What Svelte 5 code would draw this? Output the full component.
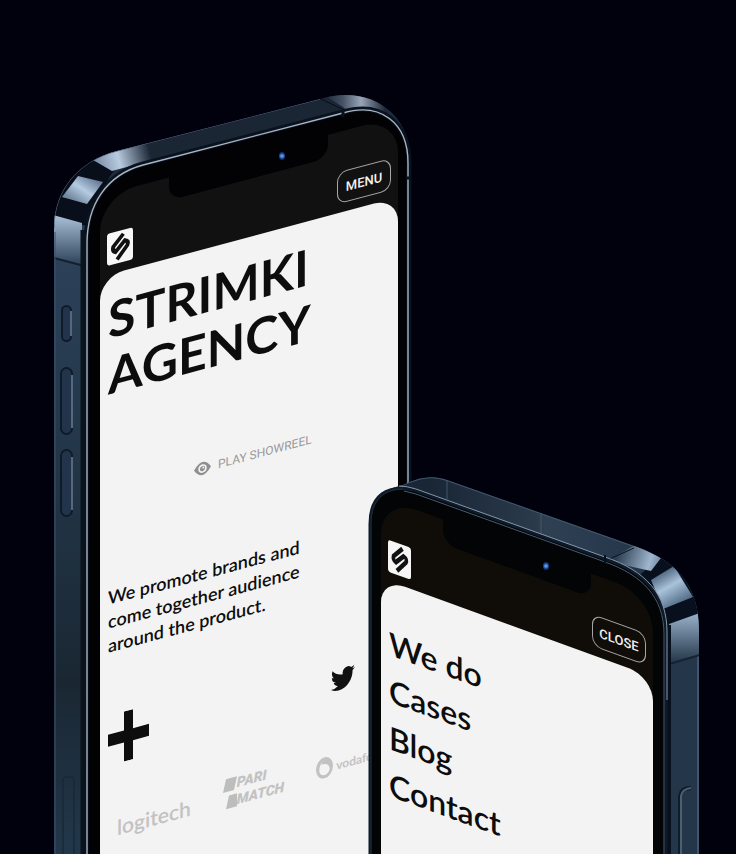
<script>
  const menu = ['We do', 'Cases', 'Blog', 'Contact'];
</script>

{#snippet logo()}
  <a class="logo" href="#home" aria-label="Strimki home">
    <svg viewBox="0 0 27 32" preserveAspectRatio="none" aria-hidden="true">
      <path d="M17 4 L6.500 14.500 Q5.500 18.500 9 20 L18.500 11 Q23 12.500 21 16.500 L10.500 28" />
    </svg>
  </a>
{/snippet}

<main>
  <article class="phone back">
    <svg class="body" viewBox="50 90 362 764" aria-hidden="true">
      <defs>
        <linearGradient id="side1" gradientUnits="userSpaceOnUse" x1="0" y1="150" x2="0" y2="860">
          <stop offset="0" stop-color="#1b2635" />
          <stop offset="0.15" stop-color="#2c4058" />
          <stop offset="0.4" stop-color="#24384b" />
          <stop offset="0.75" stop-color="#1a2733" />
          <stop offset="1" stop-color="#22384b" />
        </linearGradient>
        <linearGradient id="glowA" gradientUnits="userSpaceOnUse" x1="98" y1="166" x2="150" y2="152">
          <stop offset="0" stop-color="#7d91a9" />
          <stop offset="0.4" stop-color="#b9cbe0" />
          <stop offset="1" stop-color="#1b2635" />
        </linearGradient>
        <linearGradient id="glowB" gradientUnits="userSpaceOnUse" x1="92" y1="178" x2="76" y2="202">
          <stop offset="0" stop-color="#6c8199" />
          <stop offset="0.5" stop-color="#b4cbe2" />
          <stop offset="1" stop-color="#71889f" />
        </linearGradient>
        <linearGradient id="glowC" gradientUnits="userSpaceOnUse" x1="0" y1="216" x2="0" y2="262">
          <stop offset="0" stop-color="#a8bfd6" />
          <stop offset="1" stop-color="#34495f" />
        </linearGradient>
        <linearGradient id="glowD" gradientUnits="userSpaceOnUse" x1="325" y1="0" x2="411" y2="0">
          <stop offset="0" stop-color="#1f2a38" />
          <stop offset="0.2" stop-color="#445062" />
          <stop offset="0.42" stop-color="#98a4b8" />
          <stop offset="0.7" stop-color="#1c2738" />
          <stop offset="1" stop-color="#26384c" />
        </linearGradient>
        <clipPath id="shape1">
          <path d="M54 1600 V228 C54 190 78 161 117 151 L320 99 C370 84 411 113 411 163 V1600 Z" />
        </clipPath>
      </defs>
      <g clip-path="url(#shape1)">
        <rect x="50" y="90" width="362" height="1500" fill="url(#side1)" />
        <path d="M54 216 L86 226 L110 176 L120 164 L118 145 L60 160 Z" fill="#080f1b" />
        <path d="M93 160 L117 149 L160 138 V158 L112 171 Z" fill="url(#glowA)" />
        <path d="M78 176 L103 182 L87 204 L62 197 Z" fill="url(#glowB)" />
        <path d="M53 215 L82 223 V264 L53 258 Z" fill="url(#glowC)" />
        <path d="M319 92 L343 107 L412 170 L420 90 Z" fill="url(#glowD)" />
        <path d="M319 98 L344 110" stroke="#080d16" stroke-width="1" />
        <path d="M54 258 L88 267" stroke="#121f2e" stroke-width="2" />
        <path d="M83 230 V1600" stroke="#0b131d" stroke-width="5" />
        <path d="M55 232 V1600" stroke="#3c526a" stroke-width="1" />
        <path d="M54 228 C54 190 78 161 117 151 L320 99" fill="none" stroke="#50647b" stroke-width="1" />
      </g>
      <path d="M86 1600 V244 C86 205 106 174 143 164 L343 112 C381 101 409 122 409 163 V1600 Z" fill="#020204" stroke="#0a121e" stroke-width="5" />
      <path d="M87 1600 V244 C87 205 106 175 143 165 L343 113 C380 102 408 122 408 163 V1600" fill="none" stroke="#a7b5c5" stroke-width="1.400" />
      <path d="M343 110 V117 M406 178 H411" stroke="#09111c" stroke-width="3" />
      <g class="key">
        <rect x="62" y="306" width="9" height="35" rx="4.500" />
        <rect x="61" y="368" width="11" height="66" rx="5.500" />
        <rect x="61" y="450" width="11" height="66" rx="5.500" />
      </g>
      <path d="M71 311 V336 M72 375 V428 M72 457 V510" stroke="#6c8298" stroke-width="1.500" />
      <path d="M63 854 V780 Q63 777 66 777 H71 Q74 777 74 780 V854" fill="none" stroke="#152430" stroke-width="1" />
    </svg>
    <div class="screen left">
      <header>
        {@render logo()}
        <button class="pill">MENU</button>
      </header>
      <section class="card home">
        <h1>STRIMKI<br />AGENCY</h1>
        <button class="reel">
          <svg viewBox="0 0 17 16" width="17" height="16" aria-hidden="true">
            <path d="M0 8 Q8.500 -5 17 8 Q8.500 21 0 8 Z" fill="#8f8f8f" />
            <circle cx="8.500" cy="8" r="4.200" fill="#f3f3f3" />
            <circle cx="8.500" cy="8" r="2.600" fill="#8f8f8f" />
            <circle cx="9.300" cy="7.200" r="1" fill="#f3f3f3" />
          </svg>
          PLAY SHOWREEL
        </button>
        <p>We promote brands and<br />come together audience<br />around the product.</p>
        <div class="marks">
          <svg viewBox="0 0 41 50" width="41" height="50" aria-hidden="true">
            <path d="M16 0 H25 V19 H41 V31 H25 V50 H16 V31 H0 V19 H16 Z" fill="#0d0d0d" />
          </svg>
          <a href="#twitter" aria-label="Twitter">
            <svg viewBox="0 0 24 24" width="24" height="27" preserveAspectRatio="none" aria-hidden="true">
              <path fill="#111" d="M23.950 4.570a10 10 0 0 1-2.820.770 4.960 4.960 0 0 0 2.160-2.720c-.950.550-2 .960-3.130 1.180a4.920 4.920 0 0 0-8.380 4.480C7.690 8.090 4.070 6.130 1.640 3.160a4.820 4.820 0 0 0-.670 2.480c0 1.710.870 3.210 2.190 4.100a4.900 4.900 0 0 1-2.230-.620v.060a4.920 4.920 0 0 0 3.950 4.830 5 5 0 0 1-2.210.080 4.940 4.940 0 0 0 4.600 3.420A9.870 9.870 0 0 1 0 19.540a13.990 13.990 0 0 0 7.550 2.210c9.050 0 14-7.500 14-13.980 0-.210 0-.420-.020-.630a9.940 9.940 0 0 0 2.420-2.570z" />
            </svg>
          </a>
        </div>
        <div class="clients">
          <span class="logitech">logitech</span>
          <span class="pari">
            <svg viewBox="0 0 14 34" width="14" height="34" aria-hidden="true">
              <path d="M3 2 H14 L11 15 H0 Z M6 19 H14 V32 H3 Z" fill="#bdbdbd" />
            </svg>
            <span>PARI<br />MATCH</span>
          </span>
          <span class="vodafone">
            <svg viewBox="0 0 17 22" width="17" height="22" aria-hidden="true">
              <ellipse cx="8.500" cy="11" rx="8.500" ry="10.500" fill="#c2c2c2" />
              <path d="M11 1 C7 3 5.500 4.500 5.500 7 C11 6.500 14.500 10 13.500 14.500 C11.500 20 4.500 19 3.500 14 C2.500 9 5.500 3 11 1 Z" fill="#f3f3f3" />
            </svg>
            vodafone
          </span>
        </div>
      </section>
      <i class="notch"></i>
    </div>
    <i class="lens"></i>
  </article>

  <article class="phone front">
    <svg class="body" viewBox="368 474 334 380" aria-hidden="true">
      <defs>
        <linearGradient id="side2" gradientUnits="userSpaceOnUse" x1="430" y1="0" x2="640" y2="0">
          <stop offset="0" stop-color="#182636" />
          <stop offset="0.5" stop-color="#2b3a4a" />
          <stop offset="0.55" stop-color="#2f4053" />
          <stop offset="1" stop-color="#24364a" />
        </linearGradient>
        <linearGradient id="glowE" gradientUnits="userSpaceOnUse" x1="618" y1="552" x2="660" y2="566">
          <stop offset="0" stop-color="#2b3d51" />
          <stop offset="0.75" stop-color="#9fb6ce" />
          <stop offset="1" stop-color="#71879e" />
        </linearGradient>
        <linearGradient id="glowF" gradientUnits="userSpaceOnUse" x1="662" y1="572" x2="680" y2="603">
          <stop offset="0" stop-color="#50677f" />
          <stop offset="0.45" stop-color="#a9c3db" />
          <stop offset="1" stop-color="#56708a" />
        </linearGradient>
        <linearGradient id="glowG" gradientUnits="userSpaceOnUse" x1="0" y1="616" x2="0" y2="660">
          <stop offset="0" stop-color="#92abc3" />
          <stop offset="1" stop-color="#2a3d50" />
        </linearGradient>
        <clipPath id="shape2">
          <path d="M369 1600 V524 C369 500 383 489 403 485 C416 479 430 474 447 480 L637 547 C676 561 699 585 699 630 V1600 Z" />
        </clipPath>
      </defs>
      <g clip-path="url(#shape2)">
        <rect x="368" y="470" width="334" height="1130" fill="url(#side2)" />
        <path d="M447 480 V499 M541 513 V534" stroke="#42566c" stroke-width="1" />
        <path d="M400 486 C416 479 430 474 447 480 L637 547 C676 561 699 585 698 630 V1600" fill="none" stroke="#41566c" stroke-width="2" />
        <path d="M640 575 L662 555 L710 590 L697 616 L667 626 Z" fill="#07101c" />
        <path d="M635 545 L661 558 L651 571 L606 561 Z" fill="url(#glowE)" />
        <path d="M651 580 L674 566 L693 597 L663 609 Z" fill="url(#glowF)" />
        <path d="M669 624 L700 613 V655 L669 664 Z" fill="url(#glowG)" />
        <path d="M669 664 L700 655" stroke="#16222f" stroke-width="2" />
        <path d="M605 561 L634 548" stroke="#0b141f" stroke-width="1" />
        <path d="M669 625 V1600" stroke="#07111d" stroke-width="4" />
      </g>
      <path d="M370 1600 V524 C370 495 387 484 414 490 L605 559 C645 572 666 595 666 634 V1600 Z" fill="#030405" stroke="#0e1a28" stroke-width="3" />
      <path d="M399 486 Q407 486 416 489 L605 557 C646 571 667 594 667 632 V700" fill="none" stroke="#8396a9" stroke-width="1" />
      <path d="M404 491 L416 494 L605 562 C642 575 664 597 664 634 V1600" fill="none" stroke="#485b70" stroke-width="1" />
      <path d="M371 1600 V524 C371 500 384 489 403 489" fill="none" stroke="#202e3c" stroke-width="1" />
      <path d="M605 555 V564" stroke="#08101a" stroke-width="2" />
      <path d="M680 1600 V796 Q681 788 691 788" fill="none" stroke="#0f1c2a" stroke-width="4" />
      <path d="M681 1600 V796 Q682 789 691 788" fill="none" stroke="#48606f" stroke-width="2" />
    </svg>
    <div class="screen right">
      <header>
        {@render logo()}
        <button class="pill">CLOSE</button>
      </header>
      <nav class="card" aria-label="Main">
        {#each menu as item}
          <a href="#{item}">{item}</a>
        {/each}
      </nav>
      <i class="notch"></i>
    </div>
    <i class="lens"></i>
  </article>
</main>

<style>
  :global(body) { margin: 0; background: #01010d; }
  main {
    position: relative;
    height: 100vh;
    min-height: 854px;
    overflow: hidden;
    background: #01010d;
    color: #0d0d0d;
    font-family: Lato, "Liberation Sans", sans-serif;
  }
  .phone { position: absolute; }
  .back { left: 50px; top: 90px; width: 362px; }
  .front { left: 368px; top: 474px; width: 334px; }
  .body { display: block; width: 100%; overflow: visible; }
  .key rect { fill: #22344c; stroke: #101b29; stroke-width: 2; }

  .screen {
    position: absolute;
    height: 1200px;
    display: flex;
    flex-direction: column;
    border-radius: 36px;
    transform-origin: 0 0;
  }
  .left { left: 50px; top: 106px; width: 298px; background: #111; transform: skewY(-15deg); }
  .right { left: 13px; top: 23px; width: 272px; background: #100d09; transform: skewY(20deg); }
  header {
    box-sizing: border-box;
    height: 81px;
    padding: 40px 7px 9px;
    display: flex;
    justify-content: space-between;
    align-items: stretch;
  }
  .logo { width: 26px; border-radius: 3px; background: #f6f6f6; }
  .right .logo { width: 23px; }
  .logo svg { display: block; width: 100%; height: 100%; }
  .logo path { fill: none; stroke: #111; stroke-width: 4.200; }
  button { margin: 0; padding: 0; border: 0; background: none; font: inherit; cursor: pointer; }
  .pill {
    width: 54px;
    border: 1px solid #a5a5a5;
    border-radius: 10px;
    color: #f2f2f2;
    font: 500 13px Roboto, sans-serif;
  }
  .card {
    flex: 1;
    padding: 17px 8px 0;
    border-radius: 24px 24px 0 0;
    background: #f3f3f3;
    display: flex;
    flex-direction: column;
    align-items: flex-start;
  }
  h1 {
    margin: 0;
    font-size: 50px;
    line-height: 56px;
    font-weight: 700;
  }
  .reel {
    margin: 80px 0 0 86px;
    display: flex;
    align-items: center;
    gap: 7px;
    color: #999;
    font: 400 12px/20px Roboto, sans-serif;
    white-space: nowrap;
  }
  p { margin: 82px 0 0; font-size: 18px; line-height: 24px; font-weight: 600; white-space: nowrap; }
  .marks {
    align-self: stretch;
    margin-top: 58px;
    padding-right: 35px;
    display: flex;
    justify-content: space-between;
    align-items: center;
  }
  .marks svg { display: block; }
  .clients {
    margin: 36px 0 0 9px;
    display: flex;
    align-items: center;
    gap: 32px;
    color: #c2c2c2;
    white-space: nowrap;
  }
  .logitech { padding-top: 8px; font-size: 21px; line-height: 40px; font-weight: 600; }
  .pari { display: flex; align-items: center; font: italic 900 14px/17px Roboto, sans-serif; }
  .vodafone { display: flex; align-items: center; gap: 3px; font-size: 12px; font-weight: 700; }
  nav.card { padding-top: 38px; }
  nav a { color: #0d0d0d; text-decoration: none; font-size: 32px; line-height: 47px; font-weight: 600; }

  .notch { position: absolute; top: -4px; background: #020204; border-radius: 0 0 14px 14px; }
  .left .notch { left: 69px; width: 159px; height: 27px; }
  .right .notch { left: 62px; width: 148px; height: 28px; background: #030405; }
  .lens {
    position: absolute;
    width: 6px;
    height: 8px;
    border-radius: 50%;
    background: radial-gradient(circle, #5a9bea 0 20%, #1c4694 50%, #071330 100%);
  }
  .back .lens { left: 229px; top: 62px; }
  .front .lens { left: 175px; top: 88px; }
</style>
